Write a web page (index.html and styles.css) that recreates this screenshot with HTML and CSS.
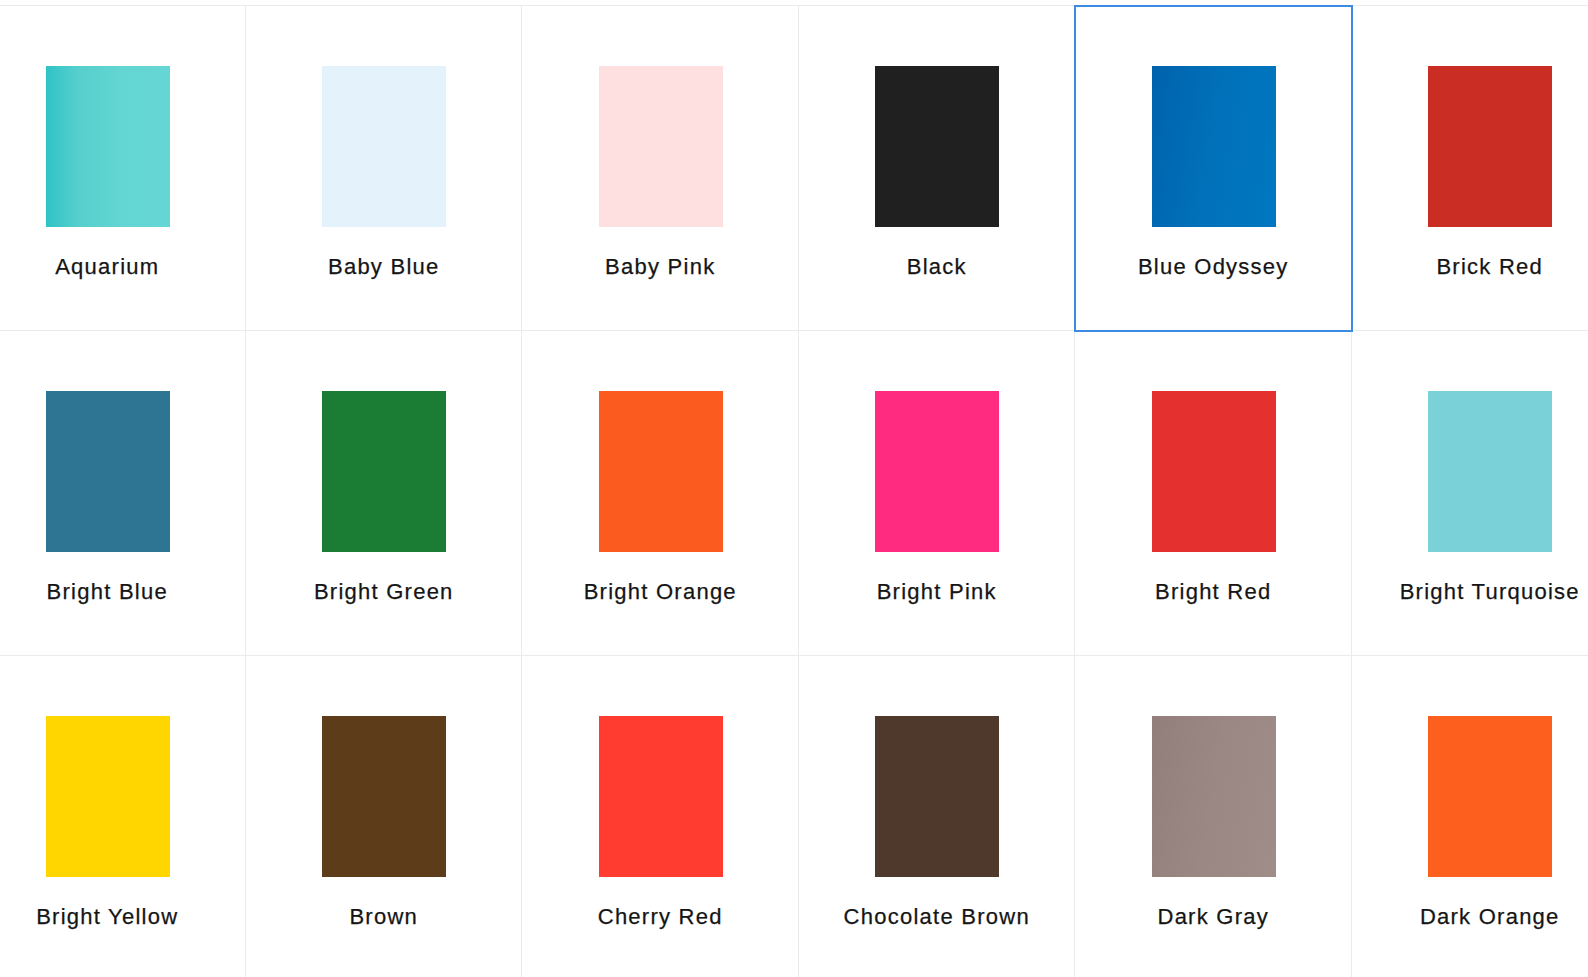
FILE: index.html
```html
<!DOCTYPE html>
<html>
<head>
<meta charset="utf-8">
<link rel="stylesheet" href="styles.css">
</head>
<body>
<div class="grid">
  <div class="cell"><div class="swatch aquarium"></div><div class="label">Aquarium</div></div>
  <div class="cell"><div class="swatch baby-blue"></div><div class="label">Baby Blue</div></div>
  <div class="cell"><div class="swatch baby-pink"></div><div class="label">Baby Pink</div></div>
  <div class="cell"><div class="swatch black"></div><div class="label">Black</div></div>
  <div class="cell selected"><div class="swatch blue-odyssey"></div><div class="label">Blue Odyssey</div></div>
  <div class="cell"><div class="swatch brick-red"></div><div class="label">Brick Red</div></div>
  <div class="cell"><div class="swatch bright-blue"></div><div class="label">Bright Blue</div></div>
  <div class="cell"><div class="swatch bright-green"></div><div class="label">Bright Green</div></div>
  <div class="cell"><div class="swatch bright-orange"></div><div class="label">Bright Orange</div></div>
  <div class="cell"><div class="swatch bright-pink"></div><div class="label">Bright Pink</div></div>
  <div class="cell"><div class="swatch bright-red"></div><div class="label">Bright Red</div></div>
  <div class="cell"><div class="swatch bright-turquoise"></div><div class="label">Bright Turquoise</div></div>
  <div class="cell"><div class="swatch bright-yellow"></div><div class="label">Bright Yellow</div></div>
  <div class="cell"><div class="swatch brown"></div><div class="label">Brown</div></div>
  <div class="cell"><div class="swatch cherry-red"></div><div class="label">Cherry Red</div></div>
  <div class="cell"><div class="swatch chocolate-brown"></div><div class="label">Chocolate Brown</div></div>
  <div class="cell"><div class="swatch dark-gray"></div><div class="label">Dark Gray</div></div>
  <div class="cell"><div class="swatch dark-orange"></div><div class="label">Dark Orange</div></div>
</div>
</body>
</html>
```

FILE: styles.css
```css
html, body {
  margin: 0;
  padding: 0;
  background: #ffffff;
  overflow: hidden;
}
body {
  font-family: "Liberation Sans", Arial, sans-serif;
  width: 1588px;
  height: 977px;
}
.grid {
  display: grid;
  grid-template-columns: repeat(6, 276.5px);
  grid-auto-rows: 325px;
  margin-top: 5px;
  margin-left: -31px;
  width: 1659px;
  border-top: 1px solid #ebebeb;
}
.cell {
  box-sizing: border-box;
  border-right: 1px solid #ebebeb;
  border-bottom: 1px solid #ebebeb;
  display: flex;
  flex-direction: column;
  align-items: center;
  padding-top: 60px;
  position: relative;
}
.cell.selected {
  outline: 2px solid #3d8ae2;
  outline-offset: -1px;
  z-index: 1;
}
.swatch {
  width: 124px;
  height: 161px;
  margin-left: 2px;
}
.label {
  margin-top: 27px;
  margin-left: 1px;
  font-size: 22px;
  line-height: 26px;
  letter-spacing: 1.25px;
  color: #151515;
  -webkit-text-stroke: 0.25px #151515;
  white-space: nowrap;
}
.aquarium { background: linear-gradient(90deg, #2fc3c6 0%, #55cfcd 25%, #63d5d2 60%, #65d6d3 100%); }
.baby-blue { background: #e4f2fb; }
.baby-pink { background: #fde0df; }
.black { background: #202020; }
.blue-odyssey { background: linear-gradient(100deg, #0062ad 0%, #0070b9 45%, #0078c1 100%); }
.brick-red { background: #c92d23; }
.bright-blue { background: #2e7594; }
.bright-green { background: #1b7d34; }
.bright-orange { background: #fb5b1f; }
.bright-pink { background: #ff2b81; }
.bright-red { background: #e43130; }
.bright-turquoise { background: #7ad1d7; }
.bright-yellow { background: #ffd600; }
.brown { background: #5d3c19; }
.cherry-red { background: #ff3c2f; }
.chocolate-brown { background: #4f382c; }
.dark-gray { background: linear-gradient(100deg, #927e7a 0%, #9b8783 50%, #9f8d89 100%); }
.dark-orange { background: #fd5f1f; }
```
